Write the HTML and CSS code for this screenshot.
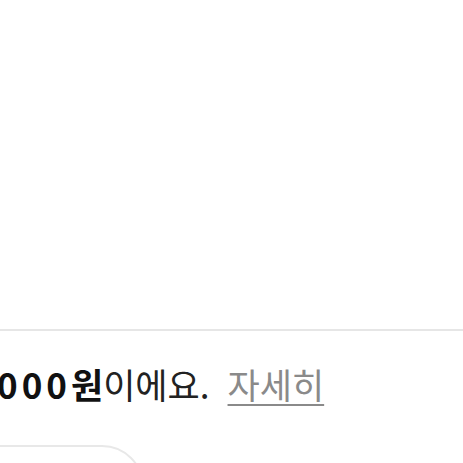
FILE: index.html
```html
<!DOCTYPE html>
<html lang="ko">
<head>
  <meta charset="UTF-8" />
  <title>혜택 안내</title>
  <link rel="stylesheet" href="styles.css">
</head>
<body>
  <div class="top"></div>

  <p class="notice">
    <span class="amount"><span class="digits">000</span>원</span>이에요.<a class="more" href="#">자세히</a>
  </p>

  <div class="card"></div>
</body>
</html>
```

FILE: styles.css
```css
body {
  margin: 0;
  font-family: 'Noto Sans CJK KR', 'Noto Sans', sans-serif;
  background-color: #ffffff;
  color: #222;
  overflow: hidden;
  height: 463px;
}

.top {
  height: 329px;
  border-bottom: 2px solid #e6e6e6;
}

.notice {
  margin: 0;
  padding-top: 30px;
  margin-left: -3px;
  font-size: 35px;
  line-height: 46px;
  white-space: nowrap;
}

.amount {
  font-weight: 700;
  color: #111;
}

.digits {
  letter-spacing: 4px;
}

.more {
  margin-left: 18px;
  color: #8a8a8a;
  text-decoration: underline;
  text-underline-offset: 5px;
  text-decoration-thickness: 2px;
}

.card {
  margin-top: 38px;
  margin-left: -40px;
  width: 180px;
  height: 100px;
  border: 2px solid #e8e8e8;
  border-radius: 42px;
}
```
